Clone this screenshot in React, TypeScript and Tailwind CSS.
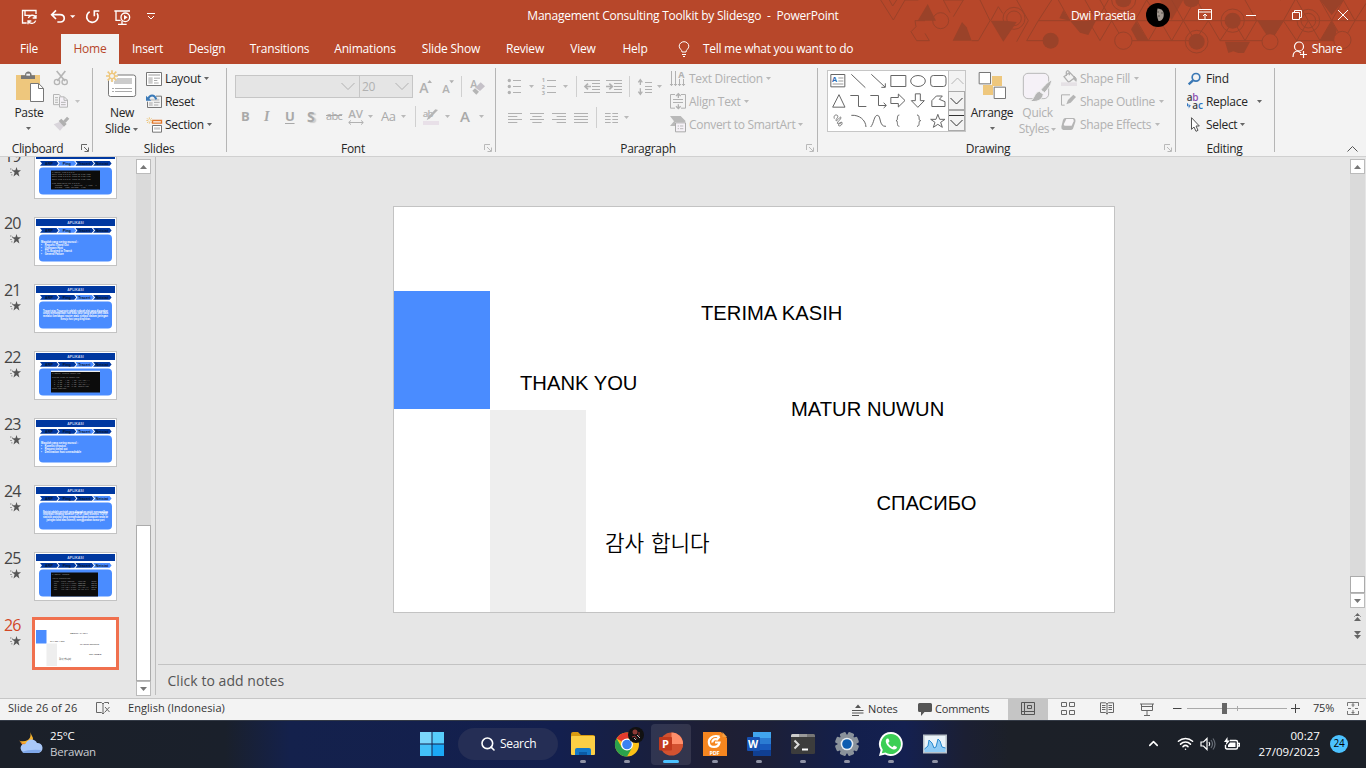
import React from "react";
import { Search, Wifi, ChevronUp } from "lucide-react";

/* Icon whose drawing units are a third of a pixel. */
function Ic({ v, c = "", children }: { v: string; c?: string; children?: React.ReactNode }) {
  const [, , w, h] = v.split(" ").map(Number);
  return (
    <svg viewBox={v} width={w / 3} height={h / 3} className={"shrink-0 overflow-visible " + c} fill="none" strokeWidth={3}>
      {children}
    </svg>
  );
}

function Caret({ c = "", tone = "fill-[#666]" }: { c?: string; tone?: string }) {
  return (
    <svg viewBox="0 0 5 3" width={5} height={3} className={"shrink-0 " + tone + " " + c}>
      <path d="M0 0H5L2.5 3Z" />
    </svg>
  );
}

function Launcher({ tone = "stroke-[#b9b9b9]" }: { tone?: string }) {
  return (
    <svg viewBox="0 0 8 8" width={8} height={8} fill="none" className={"shrink-0 " + tone}>
      <path d="M.5 6V.5H6M3 3l4 4M7.5 3.500V7.500H3.500" />
    </svg>
  );
}

function Group({ c, label, labelC, launcher, children }: { c: string; label: string; labelC: string; launcher?: React.ReactNode; children: React.ReactNode }) {
  return (
    <section className={"flex shrink-0 " + c}>
      <div className="flex min-w-0 flex-1 flex-col">
        <div className="flex h-[75px] items-start">{children}</div>
        <div className="flex h-[17px] items-center">
          <span className={"shrink-0 pt-[2px] text-center leading-[16px] text-[#262626] " + labelC}>{label}</span>
          <span className="ml-auto mr-[3px]">{launcher}</span>
        </div>
      </div>
      <div className="my-1 w-px bg-[#b5b5b5]" />
    </section>
  );
}

function Line({ icon, text, caret, off, c = "" }: { icon: React.ReactNode; text: string; caret?: string; off?: boolean; c?: string }) {
  return (
    <div className={"flex h-[23px] items-center whitespace-nowrap " + c}>
      <span className="flex w-[19px] shrink-0 items-center">{icon}</span>
      <span className={off ? "text-[#b1b1b1]" : "text-[#262626]"}>{text}</span>
      {caret && <Caret c={caret} tone={off ? "fill-[#b9b9b9]" : "fill-[#666]"} />}
    </div>
  );
}

function Pattern() {
  const d = "#9a4229";
  return (
    <svg className="absolute right-0 top-0" viewBox="0 0 1548 192" width={516} height={64} fill="none" stroke={d} strokeWidth={3}>
      <path d="M92 0L130 60L165 0M118 0L128 18L140 0M165 0H205M225 62H195L198 80L183 95L200 122H238L225 100M280 0L300 38M280 0H340L310 50M365 122H385L420 62L390 0M422 62L445 20L458 40M500 125L535 62L500 0M530 122L565 62H660M530 122H580M565 62L605 0M625 0L660 62M740 62L705 0M740 62L775 0M750 122L785 62L820 122H1040M750 122L715 62H1548M785 62L750 0M855 62L890 0L930 62L895 122L860 62M930 62L965 122L1000 62L965 0M1000 62L1035 0M1000 62L1035 122M1035 122L1075 62L1040 0M1075 62L1110 122L1150 62L1185 122L1220 62M1220 62L1185 0M1262 122L1300 62L1340 122L1375 62L1410 122L1445 62L1410 0M1300 62L1335 0M1375 62L1340 0M1445 62L1480 0L1515 62L1548 10M1515 62L1480 122H1340M1110 122H1240M1480 122L1445 62" />
      <g fill={d} stroke="none">
        <path d="M203 62L233 12L258 62Z" />
        <path d="M308 122L336 66L350 82L365 122Z" />
        <path d="M422 62H465L500 66L460 125Z" />
        <path d="M640 30L660 62H738L715 105L690 98L660 62L628 55Z" />
        <path d="M843 88L858 64L895 122H862Z" />
        <path d="M930 0L965 60L1000 0Z" opacity=".75" />
        <path d="M1222 62H1302L1262 124Z" />
        <path d="M1125 125H1200L1182 159H1165L1150 154L1135 159Z" />
        <path d="M1410 0H1482L1445 45Z" />
        <path d="M1410 122L1445 64L1460 90L1452 122Z" />
        <circle cx="602" cy="122" r="24" />
        <path d="M796 0A24 22 0 0 0 844 0Z" />
        <circle cx="1040" cy="125" r="24" />
        <circle cx="1148" cy="62" r="24" />
        <path d="M1000 0A24 22 0 0 0 1048 0Z" />
      </g>
      <g>
        <circle cx="272" cy="62" r="24" />
        <circle cx="492" cy="55" r="22" /><circle cx="492" cy="55" r="33" />
        <circle cx="820" cy="122" r="26" fill="#b7472a" />
        <circle cx="1040" cy="125" r="34" /><circle cx="1148" cy="62" r="35" />
        <circle cx="1260" cy="125" r="24" fill="#b7472a" />
        <circle cx="1375" cy="62" r="22" /><circle cx="1375" cy="62" r="34" />
        <circle cx="1477" cy="120" r="26" fill="#b7472a" />
        <path d="M785 0A36 33 0 0 0 857 0M1335 0A36 33 0 0 0 1290 0" />
      </g>
    </svg>
  );
}

function TitleBar() {
  return (
    <header className="flex h-[34px] text-white">
      <div className="flex w-[400px] items-start pl-[21px] pt-[9px]">
        <Ic v="63 27 51 51" c="stroke-white">
          <path d="M80 69H67.500V31.500H108V42M75 33V46H92" strokeWidth={4} />
          <path d="M85 54A12 12 0 0 1 107 52M108 45V54H98M107 62A12 12 0 0 1 85 64M84 73V63H94" strokeWidth={4} />
        </Ic>
        <Ic v="150 27 78 51" c="ml-[12px] stroke-white">
          <path d="M156 44H180C197 44 197 67 180 66H172M168 31L155 44L168 57" strokeWidth={5} />
          <path d="M210 46H226L218 54Z" fill="white" stroke="none" />
        </Ic>
        <Ic v="255 27 48 51" c="ml-[9px] stroke-white">
          <path d="M269 35A17 17 0 1 0 291 40" strokeWidth={5} /><path d="M298 33H283V49" strokeWidth={5} />
        </Ic>
        <Ic v="342 27 51 51" c="ml-[13px] stroke-white">
          <path d="M343 33H390M348 34V61H362M354 73H380M366 62V72" strokeWidth={4} />
          <circle cx="376" cy="52" r="13" strokeWidth={4} fill="#b7472a" /><path d="M372 45V59L383 52Z" fill="white" stroke="none" />
        </Ic>
        <Ic v="438 27 30 51" c="ml-[15px] stroke-white">
          <path d="M441 40.500H465M444 48L453 57L462 48" />
        </Ic>
      </div>
      <div className="flex-1 whitespace-pre pt-[7px] text-center leading-[18px] tracking-[-0.23px]">Management Consulting Toolkit by Slidesgo  -  PowerPoint</div>
      <div className="relative flex w-[400px] items-start pl-[105px]">
        <span className="w-[75px] whitespace-nowrap pt-[7px] leading-[18px] tracking-[-0.4px]">Dwi Prasetia</span>
        <svg width={24} height={24} viewBox="0 0 24 24" className="mt-[3px]">
          <circle cx="12" cy="12" r="12" fill="#000" />
          <path d="M11.500 5.500C16.500 5.500 18.500 9 17.500 14C16.500 17 14.500 18.500 12.500 18Q10 12 11.500 5.500Z" fill="#a0978f" />
          <path d="M12 8v2M16 9v2M13 12v2" stroke="#5a5450" fill="none" />
        </svg>
        <svg width={14} height={12} viewBox="0 0 14 12" fill="none" stroke="white" className="ml-[28px] mt-[9px]">
          <path d="M.5.5h13v10H.5zM.5 3H13.500M7 10V5M5 7l2-2 2 2" />
        </svg>
        <svg width={12} height={12} viewBox="0 0 12 12" stroke="white" className="ml-[33px] mt-[9px]"><path d="M1 6.500H11" /></svg>
        <svg width={12} height={12} viewBox="0 0 12 12" fill="none" stroke="white" className="ml-[34px] mt-[9px]"><path d="M1.500 3.500h7v7h-7zM3.500 3.500v-2h7v7h-2" /></svg>
        <svg width={12} height={12} viewBox="0 0 12 12" fill="none" stroke="white" className="ml-[34px] mt-[9px]"><path d="M1 1l10 10M11 1L1 11" /></svg>
      </div>
    </header>
  );
}

const tabs: [string, string][] = [
  ["Insert", "w-[57px]"],
  ["Design", "w-[62px]"],
  ["Transitions", "w-[83px]"],
  ["Animations", "w-[88px]"],
  ["Slide Show", "w-[84px]"],
  ["Review", "w-[64px]"],
  ["View", "w-[52px]"],
  ["Help", "w-[52px]"],
];

function TabRow() {
  return (
    <nav className="relative flex h-[30px] items-center text-white">
      <span className="w-[61px] pr-[3px] text-center">File</span>
      <span className="flex h-full w-[58px] items-center justify-center bg-[#f3f3f3] text-[#b7472a]">Home</span>
      {tabs.map(([t, w]) => (
        <span key={t} className={"whitespace-nowrap text-center " + w}>{t}</span>
      ))}
      <svg width={12} height={16} viewBox="0 0 12 16" fill="none" stroke="white" className="ml-[17px]">
        <path d="M4 11C4 8.500 1.200 8 1.200 5.200A4.800 4.500 0 0 1 10.800 5.200C10.800 8 8 8.500 8 11ZM4 13.500H8M5 15.500H7" />
      </svg>
      <span className="ml-[13px] whitespace-nowrap tracking-[-0.28px]">Tell me what you want to do</span>
      <span className="ml-auto flex items-center pr-[24px] tracking-[-0.4px]">
        <svg width={16} height={17} viewBox="0 0 16 17" fill="none" stroke="white" className="mr-[4px]">
          <circle cx="7" cy="5.500" r="4.500" strokeWidth={1.200} /><path d="M1 16C1 12 3 10 6 10L9 12M8 13.500H15M11.500 10V17" strokeWidth={1.200} />
        </svg>
        Share
      </span>
    </nav>
  );
}

function Clipboard() {
  return (
    <Group c="w-[93px]" label="Clipboard" labelC="w-[75px]" launcher={<Launcher tone="stroke-[#666]" />}>
      <div className="ml-[14px] mt-[6px] flex w-[32px] flex-col">
        <Ic v="45 210 93 99">
          <path d="M51 225H123V300H51Z" fill="#eec77d" />
          <path d="M66 237V226H78C78 211 98 211 98 226H108V237Z" fill="#777" /><path d="M82 221H93V227H82Z" fill="#f3f3f3" />
          <path d="M94.500 250.500H119L133.500 265V304.500H94.500Z" fill="white" stroke="#777" /><path d="M118.500 251V265.500H133" stroke="#777" />
        </Ic>
        <span className="mt-[2px] w-[30px] text-center leading-[16px]">Paste</span>
        <Caret c="ml-[12px] mt-[6px]" />
      </div>
      <div className="ml-[7px] mt-[6px] flex flex-col">
        <Ic v="159 210 48 48" c="stroke-[#b5b5b5]"><path d="M170 213L195 243M196 213L172 243" strokeWidth={5} /><circle cx="171" cy="246" r="8" strokeWidth={4} /><circle cx="194" cy="246" r="8" strokeWidth={4} /></Ic>
        <div className="mt-[7px] flex items-center">
          <Ic v="159 280 48 48" c="stroke-[#b5b5b5]"><path d="M177 315H160.500V284.500H177L184 291M165 294H174M165 301H174M165 308H174" /><path d="M178.500 291.500H193L202.500 301V322.500H178.500ZM192 292V302H202M183 308H197M183 315H197" fill="#f5f1f7" /></Ic>
          <Caret c="ml-[6px]" tone="fill-[#c2c2c2]" />
        </div>
        <Ic v="159 348 51 48" c="mt-[7px]"><path d="M161 373L180 365L192 378L180 392Z" fill="#d9d5db" /><path d="M176 363L184 356L200 372L192 380ZM190 362L201 350L208 356L197 368Z" fill="#b0b0b0" /></Ic>
      </div>
    </Group>
  );
}

function Slides() {
  return (
    <Group c="w-[134px]" label="Slides" labelC="ml-[46px] w-[40px]">
      <div className="ml-[12px] mt-[6px] flex w-[34px] flex-col">
        <Ic v="315 210 96 84">
          <path d="M325.500 225H400Q407 225 407 232V284Q407 289.500 400 289.500H332Q325.500 289.500 325.500 284Z" fill="white" stroke="#777" />
          <path d="M342 234H396V252H342Z" fill="#ccc" /><path d="M336 265.500H342M345 265.500H396M336 274.500H342M345 274.500H396" stroke="#aaa" />
          <circle cx="336" cy="228" r="17" fill="#f3f3f3" />
          <path d="M336 211V220M336 236V246M318 228H328M344 228H354M323 215L330 222M342 234L349 241M349 215L342 222M330 234L323 241" stroke="#eec77d" strokeWidth={5} /><circle cx="336" cy="228" r="8" stroke="#eec77d" strokeWidth={4} />
        </Ic>
        <span className="mt-[7px] text-center leading-[16px]">New</span>
        <span className="flex items-center leading-[16px]">Slide<Caret c="ml-[3px]" /></span>
      </div>
      <div className="ml-[7px] mt-[3px]">
        <Line text="Layout" caret="ml-[3px]" icon={<Ic v="438 213 48 42"><path d="M439.500 214.500H484.500V253.500H439.500Z" fill="white" stroke="#777" /><path d="M445 219H480V225H445ZM445 229H458V248H445Z" fill="#ccc" /><path d="M462 231.500H480M462 238.500H472M462 246H476" stroke="#aaa" /></Ic>} />
        <Line text="Reset" icon={<Ic v="438 282 48 45"><path d="M468 288.500H484.500V322.500H442.500V305" stroke="#777" /><path d="M446 296H478V302H446ZM447 306H458V318H447Z" fill="#ccc" /><path d="M462 307H479M462 315H475" stroke="#aaa" /><path d="M444 297C450 284 462 282 469 298" stroke="#3a7ab8" strokeWidth={6} /><path d="M438 287V302H454Z" fill="#3a7ab8" /></Ic>} />
        <Line text="Section" caret="ml-[3px]" icon={<Ic v="438 348 48 48"><path d="M457.500 358.500H484.500V366.500H457.500Z" fill="white" stroke="#e0762a" strokeWidth={4} /><path d="M457.500 373.500H484.500V393.500H457.500Z" fill="white" stroke="#777" /><path d="M462 379H480V386H462Z" fill="#ccc" /><path d="M448 349V355M448 362V368M439 358.500H445M451 358.500H457M441 352L445 356M451 362L455 366M455 352L451 356M445 362L441 366" stroke="#eec77d" /></Ic>} />
      </div>
    </Group>
  );
}

const tOff = "fill-[#b1b1b1] stroke-none font-['Open_Sans']";

function FontGroup() {
  return (
    <Group c="w-[269px]" label="Font" labelC="ml-[106px] w-[40px]" launcher={<Launcher />}>
      <div className="flex flex-col">
        <div className="mt-[10px] flex h-[25px] items-center pl-[8px]">
          <div className="flex h-[23px] w-[178px] shrink-0 border border-[#c6c6c6] bg-[#e5e5e5]">
            <div className="flex w-[124px] items-center justify-end border-r border-[#c6c6c6] pr-[4px]">
              <svg width={14} height={9} viewBox="0 0 14 9" fill="none" stroke="#b1b1b1"><path d="M.5 1l6.500 6.500L13.500 1" /></svg>
            </div>
            <div className="flex flex-1 items-center justify-between pl-[2px] pr-[3px] text-[#b1b1b1]">
              20<svg width={14} height={9} viewBox="0 0 14 9" fill="none" stroke="#b1b1b1"><path d="M.5 1l6.500 6.500L13.500 1" /></svg>
            </div>
          </div>
          <Ic v="573 45 51 66" c="ml-[4px]"><text x="580" y="97" fontSize="42" fontWeight="600" className={tOff}>A</text><path d="M604 66L611 57L618 66Z" fill="#b1b1b1" /></Ic>
          <Ic v="639 45 51 66" c="ml-[5px]"><text x="649" y="97" fontSize="34" fontWeight="600" className={tOff}>A</text><path d="M670 58H684L677 67Z" fill="#b1b1b1" /></Ic>
          <div className="ml-[5px] h-[21px] w-px bg-[#d0d0d0]" />
          <Ic v="726 45 60 66" c="ml-[6px]"><text x="733" y="81" fontSize="32" className={tOff} fontWeight="600">A</text><path d="M748 80L764 64L777 76L762 90Z" fill="#c5c1c8" /><path d="M739 89L747 82L759 92L751 101Z" fill="#b5b5b5" /></Ic>
        </div>
        <div className="mt-[7px] flex h-[21px] items-center pl-[14px] font-bold text-[#a9a9a9]">
          <span className="w-[23px] text-[13px]">B</span>
          <span className="w-[21px] font-['Liberation_Serif'] text-[14px] italic">I</span>
          <span className="w-[22px] text-[13px] underline underline-offset-2">U</span>
          <span className="w-[19px] text-[14px] [text-shadow:2px_1px_1px_#ccc]">S</span>
          <span className="w-[22px] text-[11px] font-normal tracking-[-0.7px] line-through">abc</span>
          <Ic v="366 144 48 48" c="stroke-[#b1b1b1]"><text x="367" y="171" fontSize="32" fontWeight="600" textLength="44" lengthAdjust="spacingAndGlyphs" className={tOff}>AV</text><path d="M369 184.500H411M375 178L368 184.500L375 191M405 178L412 184.500L405 191" strokeWidth={3} /></Ic>
          <Caret c="ml-[4px]" tone="fill-[#b9b9b9]" />
          <span className="ml-[8px] w-[20px] text-[13px] font-normal tracking-[-0.4px]">Aa</span>
          <Caret tone="fill-[#b9b9b9]" />
          <div className="ml-[9px] h-[21px] w-px bg-[#d0d0d0]" />
          <Ic v="588 144 54 54" c="ml-[6px]"><text x="590" y="170" fontSize="29" fontWeight="600" className={tOff} textLength="32">ab</text><path d="M636 150L612 175L602 181L606 171L628 148Z" fill="#b5b5b5" /><path d="M591 183H639V195H591Z" fill="#e8e0e8" /></Ic>
          <Caret c="ml-[5px]" tone="fill-[#b9b9b9]" />
          <span className="ml-[10px] w-[19px] text-[15px] font-semibold">A</span>
          <Caret tone="fill-[#b9b9b9]" />
        </div>
      </div>
    </Group>
  );
}

const g = "stroke-[#b1b1b1]";
const Sep = ({ c }: { c: string }) => <div className={"h-[21px] w-px shrink-0 bg-[#cfcfcf] " + c} />;

function Paragraph() {
  return (
    <Group c="w-[322px]" label="Paragraph" labelC="ml-[122px] w-[60px]" launcher={<Launcher />}>
      <div className="flex w-[174px] flex-col pl-[11px]">
        <div className="mt-[12px] flex h-[21px] items-center">
          <Ic v="51 48 45 57" c={g}><path d="M69 58.500H93M69 76.500H93M69 94.500H93" /><g fill="#b1b1b1" stroke="none"><circle cx="58" cy="58.500" r="5" /><circle cx="58" cy="76.500" r="5" /><circle cx="58" cy="94.500" r="5" /></g></Ic>
          <Caret c="ml-[7px]" tone="fill-[#b9b9b9]" />
          <Ic v="153 48 48 57" c={"ml-[7px] " + g}><path d="M171 58.500H198M171 76.500H198M171 94.500H198" />{[64, 83, 101].map((y, i) => <text key={y} x="155" y={y} fontSize="17" fontWeight="700" className={tOff}>{i + 1}</text>)}</Ic>
          <Caret c="ml-[6px]" tone="fill-[#b9b9b9]" />
          <Sep c="ml-[8px]" />
          <Ic v="279 48 54 57" c={"ml-[6px] " + g}><path d="M282 58.500H330M306 67.500H330M306 76.500H330M306 85.500H330M282 94.500H330" /><path d="M303 76.500H288M294 68L285 76.500L294 85" strokeWidth={5} /></Ic>
          <Ic v="345 48 54 57" c={"ml-[4px] " + g}><path d="M348 58.500H396M372 67.500H396M372 76.500H396M372 85.500H396M348 94.500H396" /><path d="M348 76.500H364M358 68L367 76.500L358 85" strokeWidth={5} /></Ic>
          <Sep c="ml-[6px]" />
          <Ic v="441 48 48 57" c={"ml-[7px] " + g}><path d="M465 64.500H486M465 76.500H486M465 85.500H486M465 94.500H486" /><path d="M451 57V72M445 64L451 56L457 64M451 82V100M445 92L451 100L457 92" strokeWidth={4} /></Ic>
          <Caret c="ml-[4px]" tone="fill-[#b9b9b9]" />
        </div>
        <div className="mt-[10px] flex h-[21px] items-center">
          <Ic v="51 150 48 42" c={g}><path d="M54 157.500H96M54 166.500H82M54 175.500H96M54 184.500H82" /></Ic>
          <Ic v="117 150 48 42" c={"ml-[6px] " + g}><path d="M120 157.500H162M127 166.500H155M120 175.500H162M127 184.500H155" /></Ic>
          <Ic v="183 150 48 42" c={"ml-[6px] " + g}><path d="M186 157.500H228M200 166.500H228M186 175.500H228M200 184.500H228" /></Ic>
          <Ic v="249 150 48 42" c={"ml-[6px] " + g}><path d="M252 157.500H294M252 166.500H294M252 175.500H294M252 184.500H294" /></Ic>
          <Sep c="ml-[7px]" />
          <Ic v="342 150 45 42" c={"ml-[7px] " + g}><path d="M345 157.500H362M367 157.500H384M345 166.500H362M367 166.500H384M345 175.500H362M367 175.500H384M345 184.500H362M367 184.500H384" /></Ic>
          <Caret c="ml-[5px]" tone="fill-[#b9b9b9]" />
        </div>
      </div>
      <div className="mt-[3px]">
        <Line off text="Text Direction" caret="ml-[3px]" icon={<Ic v="540 30 48 51" c={g}><path d="M544.500 33V77M556.500 33V77M568.500 57V77M580.500 57V77M540 72L544.500 77L549 72M552 72L556.500 77L561 72M564 72L568.500 77L573 72M576 72L580.500 77L585 72" /><text x="565" y="53" fontSize="27" fontWeight="700" className={tOff}>A</text></Ic>} />
        <Line off text="Align Text" caret="ml-[3px]" icon={<Ic v="540 99 48 51" c={g}><path d="M555 103.500H541.500V144.500H555M573 103.500H586.500V144.500H573M549 118.500H579M549 127.500H579" /><path d="M565 102V114M558 108L565 101L572 108M565 133V146M558 139L565 146L572 139" strokeWidth={4} /></Ic>} />
        <Line off text="Convert to SmartArt" caret="ml-[3px]" icon={<Ic v="540 168 48 51"><path d="M540 168H572L586 182V186H556V198H540L552 184Z" fill="#b9b9b9" /><path d="M556.500 188.500H586.500V215.500H556.500Z" fill="#f5f1f7" stroke="#aaa" /><path d="M563 198H567M570 198H580M563 206H567M570 206H580" stroke="#bbb" /></Ic>} />
      </div>
    </Group>
  );
}

const shapes: React.ReactNode[] = [
  <><path d="M46.500 43.500H88.500V80.500H46.500Z" /><path d="M69 54H84M69 63H84M52 72H84" stroke="#999" /><text x="50" y="66" fontSize="22" fontWeight="700" className="fill-[#2f6db5] stroke-none">A</text></>,
  <path d="M108 43L150 83" />,
  <path d="M168 43L209 81M210 70V82H198" />,
  <path d="M226.500 46.500H271.500V79.500H226.500Z" />,
  <ellipse cx="308" cy="63" rx="22" ry="16.500" />,
  <rect x="346" y="46.500" width="46" height="33" rx="8" />,
  <path d="M71 104L89 141.500H52Z" />,
  <path d="M105 106.500H129.500V139.500H153" />,
  <path d="M165 106.500H189.500V136.500H212M205 128L213 136.500L205 144" />,
  <path d="M226.500 112.500H249V102L269 121.500L249 141V130.500H226.500Z" />,
  <path d="M300 101.500H315V122H327L307.500 142L288 122H300Z" />,
  <path d="M349.500 139.500V122L363 108H381L372 118L389 125V139.500Z" />,
  <path d="M57 176C54 166 61 163 66 166C72 170 60 178 62 182C66 184 74 168 77 172C78 178 66 184 66 190C70 194 76 184 80 187C82 194 74 200 70 197C68 192 74 188 78 193" strokeWidth={2.5} />,
  <path d="M108 166C132 164 151 180 152 201" />,
  <path d="M166 201C176 190 176 166 186 166C198 166 190 201 212 199" />,
  <path d="M252 165C242 165 250 182 242 182C250 182 242 199 252 199" />,
  <path d="M305 165C316 165 307 182 316 182C307 182 316 199 305 199" />,
  <path d="M367.500 163L373 178H389L376 187L381 202L367.500 193L354 202L359 187L346 178H362Z" />,
];

function Drawing() {
  return (
    <Group c="w-[358px]" label="Drawing" labelC="ml-[145px] w-[50px]" launcher={<Launcher />}>
      <div className="ml-[9px] mt-[6px] flex h-[62px] w-[139px] border border-[#c6c6c6] bg-white">
        <div className="grid w-[121px] grid-cols-6 content-start">
          {shapes.map((s, i) => (
            <Ic key={i} v={`${38 + 60 * (i % 6)} ${33 + 60 * Math.floor(i / 6)} 60 60`} c="stroke-[#666]">{s}</Ic>
          ))}
        </div>
        <div className="flex w-[17px] flex-col bg-[#f3f3f3]">
          <div className="flex h-[20px] items-center justify-center border-l border-[#c6c6c6]"><svg width={13} height={8} viewBox="0 0 13 8" fill="none" stroke="#b5b5b5"><path d="M.5 7L6.500 1l6 6" /></svg></div>
          <div className="flex h-[20px] items-center justify-center border border-[#aaa]"><svg width={13} height={8} viewBox="0 0 13 8" fill="none" stroke="#333"><path d="M.5 1l6 6 6-6" /></svg></div>
          <div className="flex h-[21px] items-center justify-center border border-[#aaa]"><svg width={15} height={15} viewBox="0 0 15 15" fill="none" stroke="#333"><path d="M0 2.500H15M1.500 7l6 6 6-6" /></svg></div>
        </div>
      </div>
      <div className="ml-[5px] mt-[8px] flex w-[42px] flex-col items-center">
        <Ic v="486 36 87 84"><path d="M528 48H558V78H528ZM501 75H531V105H501Z" fill="#eec77d" /><path d="M489.500 37.500H523.500V71.500H489.500ZM534.500 81.500H568.500V115.500H534.500Z" fill="white" stroke="#777" /></Ic>
        <span className="mt-[5px] leading-[16px]">Arrange</span>
        <Caret c="mt-[6px]" />
      </div>
      <div className="ml-[5px] mt-[7px] flex w-[39px] flex-col items-center text-[#b1b1b1]">
        <Ic v="621 33 99 96"><rect x="628" y="40" width="76" height="76" rx="14" fill="#f5f1f7" stroke="#b9b9b9" /><path d="M712 60C714 72 704 84 692 98L680 90C694 74 702 66 712 60ZM676 94L688 103C684 124 664 126 648 124C662 118 660 98 676 94Z" fill="#b5b5b5" stroke="#f3f3f3" /></Ic>
        <span className="mt-[2px] leading-[16px]">Quick</span>
        <span className="flex items-center leading-[16px]">Styles<Caret c="ml-[2px]" tone="fill-[#b9b9b9]" /></span>
      </div>
      <div className="ml-[4px] mt-[3px]">
        <Line off text="Shape Fill" caret="ml-[4px]" icon={<Ic v="741 30 48 51" c={g}><path d="M750 50L767 37L782 53L764 67ZM757 48V36Q761 28 766 36V46" strokeWidth={4} /><path d="M780 48Q790 56 786 64L780 58Z" fill="#b1b1b1" /><path d="M741 67H789V78H741Z" fill="#e5e1e5" stroke="none" /></Ic>} />
        <Line off text="Shape Outline" caret="ml-[4px]" icon={<Ic v="741 96 48 51" c={g}><path d="M768 101.500H742.500V132.500H752" /><path d="M757 130L762 117L778 101L786 108L770 125Z" fill="#b5b5b5" stroke="none" /></Ic>} />
        <Line off text="Shape Effects" caret="ml-[4px]" icon={<Ic v="741 168 48 51"><path d="M754 174H779Q786 176 784 186L777 206Q774 211 768 210H748Q741 208 742 200L747 180Q749 174 754 174Z" fill="#b5b5b5" /><path d="M757 177H777Q780 179 779 184L773 197H752Q748 195 750 191Z" fill="#f8f6f8" /></Ic>} />
      </div>
    </Group>
  );
}

function Editing() {
  return (
    <Group c="w-[99px]" label="Editing" labelC="ml-[27px] w-[43px]">
      <div className="ml-[11px] mt-[3px]">
        <Line text="Find" icon={<Ic v="1011 213 48 42"><circle cx="1038" cy="229" r="11.500" stroke="#3a78b5" strokeWidth={5} /><path d="M1029 238L1016 250" stroke="#3a78b5" strokeWidth={7} /></Ic>} />
        <Line text="Replace" caret="ml-[9px]" icon={<Ic v="1011 276 48 51"><text x="1010" y="299" fontSize="30" fontWeight="600" fill="#444" className="font-['Open_Sans']">a<tspan fill="#8c50b0">b</tspan></text><text x="1027" y="323" fontSize="30" fontWeight="600" fill="#444" className="font-['Open_Sans']">a<tspan fill="#2f74c0">c</tspan></text><path d="M1012.500 307V315H1020M1016 310L1021 315L1016 320" stroke="#2f74c0" /></Ic>} />
        <Line text="Select" caret="ml-[3px]" icon={<Ic v="1011 345 48 51"><path d="M1024.500 350V385L1032 378L1038 391L1044 388L1038 375H1048Z" fill="white" stroke="#555" /></Ic>} />
      </div>
    </Group>
  );
}

function StarMark() {
  return (
    <svg width={11} height={10} viewBox="0 0 11 10" fill="#555">
      <path d="M6.500 0l1.100 3.300H11L8.300 5.500 9.400 9.500 6.500 7.300 3.500 9.500 4.600 5.500 2 3.300H5.400Z" /><path d="M0 1.500h1.500v1H0zM2 2.500h1v1H2zM0 5h2v.8H0zM1 7.500h1.500v.8H1z" opacity=".7" />
    </svg>
  );
}

type Deck = { n: number; active: number; kind: "term" | "list" | "para"; lines: string[] };
const deck: Deck[] = [
  { n: 19, active: 1, kind: "term", lines: ["C:\\Users> ping 8.8.8.8", "Reply from 8.8.8.8: bytes=32 time=20ms", "Reply from 8.8.8.8: bytes=32 time=21ms", "Reply from 8.8.8.8: bytes=32 time=20ms", "", "Ping statistics for 8.8.8.8:", "   Packets: Sent = 4, Received = 4, Lost = 0", "   Minimum = 20ms, Maximum = 21ms"] },
  { n: 20, active: 1, kind: "list", lines: ["Masalah yang sering muncul :", "•    Request Timed Out", "•    Unknown Host", "•    TTL Expired in Transit", "•    General Failure"] },
  { n: 21, active: 2, kind: "para", lines: ["Tracert atau Traceroute adalah sebuah alat yang digunakan", "untuk menampilkan rute atau jalur yang dilalui oleh data", "melalui berbagai router atau simpul dalam jaringan", "menuju host yang diinginkan."] },
  { n: 22, active: 2, kind: "term", lines: ["C:\\Users> tracert google.com", "", "Tracing route to google.com", "  1   2 ms   1 ms   1 ms  192.168.1.1", "  2   5 ms   4 ms   4 ms  10.0.0.1", "  3  12 ms  11 ms  12 ms  180.252.1.1", "  4  20 ms  20 ms  19 ms  google.com", "Trace complete."] },
  { n: 23, active: 2, kind: "list", lines: ["Masalah yang sering muncul :", "•    Koneksi terputus", "•    Request timed out", "•    Destination host unreachable"] },
  { n: 24, active: 3, kind: "para", lines: ["Netstat adalah perintah yang digunakan untuk menampilkan", "informasi tentang koneksi TCP/IP, tabel koneksi TCP/IP,", "statistik protokol yang menghubungkan komputer anda ke", "jaringan lokal atau internet, menggunakan nomor port"] },
  { n: 25, active: 3, kind: "term", lines: ["C:\\Users> netstat", "", "Active Connections", "  Proto  Local Address    Foreign      State", "  TCP    127.0.0.1:49670  DESKTOP      ESTAB", "  TCP    127.0.0.1:49671  DESKTOP      ESTAB", "  TCP    192.168.1.5:501  20.198.119   ESTAB", "  TCP    192.168.1.5:502  52.98.40.2   WAIT"] },
];

function MiniSlide({ d }: { d: Deck }) {
  return (
    <svg width={83} height={49} viewBox="0 0 83 49" className="font-['Liberation_Sans'] tracking-normal">
      <rect x=".5" y=".5" width="82" height="48" fill="white" stroke="#c3c3c3" />
      <rect x="2" y="2" width="79" height="7" fill="#0038a0" />
      <text x="41.500" y="6.800" fontSize="3.500" fontWeight="700" textAnchor="middle" fill="#c7d2ec">APLIKASI</text>
      {["ARP", "Ping", "Tracert", "Netstat"].map((t, i) => (
        <g key={t}>
          <path d={`M${6 + i * 17.700} 11H${22.500 + i * 17.700}L${24.500 + i * 17.700} 13.400L${22.500 + i * 17.700} 15.800H${6 + i * 17.700}L${8 + i * 17.700} 13.400Z`} fill={i === d.active ? "#4a8cff" : "#0038a0"} />
          <text x={15 + i * 17.700} y="14.800" fontSize="3.700" fontWeight="700" textAnchor="middle" fill="#07152e">{t}</text>
        </g>
      ))}
      <rect x="5" y="17.500" width="73" height="27" rx="4" fill="#4a8cff" />
      {d.kind === "term" && <rect x="17" y="20.500" width={d.n === 25 ? 47 : 49} height={d.n === 19 ? 19 : d.n === 22 ? 21 : 24} fill="#0c0c0c" />}
      {d.kind === "term" && d.n === 22 && <rect x="17" y="19.700" width="49" height="1.300" fill="#eee" />}
      {d.lines.map((l, i) =>
        d.kind === "term" ? (
          <text key={i} x="18" y={23 + i * 2.200} fontSize="1.700" fill="#aaa" className="whitespace-pre font-['Liberation_Mono']">{l}</text>
        ) : d.kind === "list" ? (
          <text key={i} x={7} y={26.200 + i * 2.900} fontSize="2.600" fontWeight="700" fill="white" className="whitespace-pre">{l}</text>
        ) : (
          <text key={i} x="41.500" y={27.500 + i * 2.900} fontSize="2.600" fontWeight="700" textAnchor="middle" fill="white" textLength={i === 3 ? (d.n === 24 ? 58 : 30) : 65} lengthAdjust="spacingAndGlyphs">{l}</text>
        ),
      )}
    </svg>
  );
}

function NavPane() {
  return (
    <aside className="flex w-[156px] shrink-0">
      <div className="flex h-[541px] w-[136px] flex-col overflow-hidden">
        <div className="mt-[-9px] flex flex-col">
          {deck.map((d) => (
            <div key={d.n} className="flex h-[67px]">
              <div className="w-[34px] pl-[4px]">
                <div className="pt-px text-[16px] leading-[15px] tracking-[-1px] text-[#444]">{d.n}</div>
                <div className="pl-[6px] pt-[3px]"><StarMark /></div>
              </div>
              <div className="pt-[2px]"><MiniSlide d={d} /></div>
            </div>
          ))}
          <div className="flex h-[67px]">
            <div className="w-[32px] pl-[4px]">
              <div className="pt-px text-[16px] leading-[15px] tracking-[-1px] text-[#d24726]">26</div>
              <div className="pl-[6px] pt-[3px]"><StarMark /></div>
            </div>
            <svg width={87} height={53} viewBox="0 0 87 53" className="font-['Liberation_Sans'] tracking-normal" fontSize="2.500" fill="#222">
              <rect x="1.500" y="1.500" width="84" height="50" fill="white" stroke="#f0704e" strokeWidth={3} />
              <rect x="4" y="13" width="10.500" height="13.500" fill="#4a8cff" /><rect x="14.500" y="26.500" width="10.500" height="22.500" fill="#eee" />
              <text x="38" y="16.800">TERIMA KASIH</text><text x="18" y="24.500">THANK YOU</text><text x="48" y="27.800">MATUR NUWUN</text><text x="57" y="38">СПАСИБО</text><text x="27" y="42.800" className="font-['Noto_Sans_CJK_KR']">감사 합니다</text>
            </svg>
          </div>
        </div>
      </div>
      <div className="mt-[2px] flex h-[537px] w-[15px] flex-col bg-[#dadada]">
        <ScrollButton up />
        <div className="mt-auto h-[156px] border border-[#ababab] bg-white" />
        <ScrollButton />
      </div>
      <div className="ml-[4px] h-[538px] w-px bg-[#bdbdbd]" />
    </aside>
  );
}

function ScrollButton({ up }: { up?: boolean }) {
  return (
    <div className="flex h-[15px] w-[15px] shrink-0 items-center justify-center border border-[#bbb] bg-white">
      <svg width={7} height={4} viewBox="0 0 7 4" fill="#777"><path d={up ? "M0 4H7L3.500 0Z" : "M0 0H7L3.500 4Z"} /></svg>
    </div>
  );
}

const words: [string, string][] = [
  ["TERIMA KASIH", "left-[307px] top-[94px]"],
  ["THANK YOU", "left-[126px] top-[164px]"],
  ["MATUR NUWUN", "left-[397px] top-[190px]"],
  ["СПАСИБО", "left-[482.500px] top-[284px]"],
];

function Editor() {
  return (
    <main className="flex min-w-0 flex-1">
      <div className="flex flex-1 flex-col">
        <div className="flex h-[507px] items-start pl-[237px] pt-[49px]">
          <div className="relative h-[407px] w-[722px] overflow-hidden border border-[#c3c3c3] bg-white font-['Liberation_Sans'] text-[20.200px] leading-[24px] tracking-normal text-black">
            <div className="absolute left-0 top-[84px] h-[118px] w-[96px] bg-[#4a8cff]" />
            <div className="absolute left-[96px] top-[203px] h-[202px] w-[96px] bg-[#eee]" />
            {words.map(([w, c]) => (
              <span key={w} className={"absolute whitespace-nowrap " + c}>{w}</span>
            ))}
            <span className="absolute left-[211px] top-[323px] whitespace-nowrap font-['Noto_Sans_CJK_KR',sans-serif] text-[21.300px] font-[350] [word-spacing:2px]">감사 합니다</span>
          </div>
        </div>
        <div className="ml-[2px] flex h-[34px] items-center border-t border-[#c3c3c3] pb-[2px] pl-[9.500px] text-[14px] tracking-[0.05px] text-[#555]">Click to add notes</div>
      </div>
      <div className="flex w-[16px] flex-col">
        <div className="mt-[2px] flex h-[449px] w-[15px] flex-col bg-[#dadada]">
          <ScrollButton up />
          <div className="mt-auto h-[17px] border border-[#ababab] bg-white" />
          <ScrollButton />
        </div>
        <svg width={15} height={34} viewBox="0 0 15 34" fill="#666">
          <path d="M4 9H11L7.500 5ZM4 13H11L7.500 9ZM5 8h5v1H5zM4 23H11L7.500 27ZM4 27H11L7.500 31Z" />
        </svg>
        <div className="mt-[22px] h-px bg-[#c3c3c3]" />
      </div>
    </main>
  );
}

function StatusBar() {
  return (
    <footer className="flex h-[22px] items-center border-t border-[#c6c6c6] bg-[#f3f3f3] text-[11px] tracking-[0.05px] text-[#333]">
      <span className="w-[96px] whitespace-nowrap pb-[3px] pl-[8px]">Slide 26 of 26</span>
      <svg width={15} height={13} viewBox="0 0 15 13" fill="none" stroke="#666" className="mb-[2px]"><path d="M7 12V2L5.500.5H.5v10H5.500L7 12L8.500 10.500M7 2L8.500.5H12.500V2M9 5l4.500 5M13.500 5L9 10" /></svg>
      <span className="ml-[17px] whitespace-nowrap pb-[3px]">English (Indonesia)</span>
      <span className="ml-auto flex h-[21px] items-center">
        <svg width={12} height={12} viewBox="0 0 12 12" fill="none" stroke="#555"><path d="M0 6.500H11.500M0 9H11.500M0 11.500H7" /><path d="M3 4H9L6 .5Z" fill="#555" stroke="none" /></svg>
        <span className="ml-[4px] w-[50px] pb-px tracking-[-0.1px]">Notes</span>
        <svg width={14} height={13} viewBox="0 0 14 13" fill="#555" className="mb-px"><path d="M1.500 0h11Q14 0 14 1.500v6Q14 9 12.500 9H6.500L3 13V9H1.500Q0 9 0 7.500v-6Q0 0 1.500 0Z" /></svg>
        <span className="ml-[3px] w-[73px] pb-px tracking-[-0.2px]">Comments</span>
        <span className="flex h-[21px] w-[40px] items-center justify-center bg-[#c5c5c5]">
          <svg width={14} height={13} viewBox="0 0 14 13" fill="none" stroke="#555" className="mb-[2px]"><path d="M.5.5h13v12H.5zM3.500.5v12M.5 9.500h13M6.500 3.500h4v3h-4z" /></svg>
        </span>
        <svg width={14} height={13} viewBox="0 0 14 13" fill="none" stroke="#666" className="mb-[2px] ml-[13px]"><path d="M.5.5h5v4h-5zM8.500.5h5v4h-5zM.5 8.500h5v4h-5zM8.500 8.500h5v4h-5z" /></svg>
        <svg width={14} height={13} viewBox="0 0 14 13" fill="none" stroke="#666" className="mb-[2px] ml-[25px]"><path d="M7 12.500V2L5.500.8H.5V10.500H5.500L7 12L8.500 10.500H13.500V.8H8.500L7 2M2 3.500H5.500M2 5.500H5.500M2 7.500H5.500M8.500 3.500H12M8.500 5.500H12M8.500 7.500H12" /></svg>
        <svg width={14} height={13} viewBox="0 0 14 13" fill="none" stroke="#666" className="mb-px ml-[26px]"><path d="M0 1H14M1.500 1V7.500H12.500V1M7 8V12M4 12.500H10M1.500 3.500H12.500" /></svg>
        <svg width={9} height={9} viewBox="0 0 9 9" stroke="#444" className="mb-[2px] ml-[19px]"><path d="M0 4.500H8.500" /></svg>
        <span className="mb-[2px] ml-[5px] flex w-[100px] items-center">
          <span className="h-px w-[35px] bg-[#aaa]" /><span className="h-[11px] w-[5px] bg-[#666]" /><span className="h-px w-[10px] bg-[#aaa]" /><span className="h-[5px] w-px bg-[#aaa]" /><span className="h-px flex-1 bg-[#aaa]" />
        </span>
        <svg width={9} height={9} viewBox="0 0 9 9" stroke="#444" className="mb-[2px] ml-[4px]"><path d="M0 4.500H9M4.500 0V9" /></svg>
        <span className="ml-[13px] w-[34px] pb-[3px] tracking-[-0.2px]">75%</span>
        <svg width={12} height={13} viewBox="0 0 12 13" fill="none" stroke="#777" className="mb-[2px] mr-[7px]"><path d="M.5 4V.5H11.500V4M.5 9V12.500H11.500V9M6 1V5M4.500 3h3M6 8V12M4.500 10.500h3M1 6.500H4M8 6.500H11" /></svg>
      </span>
    </footer>
  );
}

const apps: { k: string; on?: boolean; art: React.ReactNode }[] = [
  { k: "explorer", art: <><path d="M0 2Q0 0 2 0H7L10 3H22Q24 3 24 5V22H0Z" fill="#d99a10" /><rect y="4" width="24" height="19" rx="1" fill="#fccf45" /><path d="M4 23V18Q4 16 6 16H18Q20 16 20 18V23Z" fill="#1478c8" /><path d="M8 20H16V23H8Z" fill="#0a5aa5" /></> },
  { k: "chrome", art: <><circle cx="12" cy="12.500" r="12" fill="#fbc116" /><path d="M12 12.500L1.600 6.500A12 12 0 0 1 22.400 6.500H12Z" fill="#e33b2e" /><path d="M1.600 6.500A12 12 0 0 0 12 24.500L17.200 15.500L12 12.500L6.800 15.500Z" fill="#2ba24c" /><circle cx="12" cy="12.500" r="6" fill="white" /><circle cx="12" cy="12.500" r="4.800" fill="#3b82f0" /><circle cx="21" cy="3" r="8" fill="#111" /><circle cx="20" cy="0" r="2.500" fill="#8d3a36" /><path d="M17 5l3-1 2 3M24 0v4" stroke="#933" fill="none" /><path d="M22 3l3 3M19 6l2 2" stroke="#bbb" /></> },
  { k: "powerpoint", on: true, art: <><circle cx="12.500" cy="12" r="11.500" fill="#d35230" /><path d="M12.500.5A11.500 11.500 0 0 1 24 12H12.500Z" fill="#ff8f6b" /><path d="M12.500 12H24A11.500 11.500 0 0 1 20.500 20Z" fill="#d35230" /><rect x="0" y="5" width="13" height="13.500" rx="1" fill="#c23a1d" /><text x="3" y="15.800" fontSize="11" fontWeight="700" fill="white">P</text></> },
  { k: "foxit", art: <><path d="M0 0H18L24 6V24H0Z" fill="#f6861f" /><path d="M19.500 0L24 5H19.500Z" fill="#f6a041" /><path d="M16.500 4.500C9 2.500 5 7 6 11.500C7 16 15.500 16.500 16.500 10.500H12M16.500 4.500L14 7.500C11 6.500 9 8.500 9.500 10.500" fill="none" stroke="white" strokeWidth="2.200" /><text x="6.500" y="22.500" fontSize="5.500" fontWeight="700" fill="white">PDF</text></> },
  { k: "word", art: <><path d="M6 0H24V6H6Z" fill="#41a5ee" /><path d="M6 6H24V12H6Z" fill="#2b7cd3" /><path d="M6 12H24V18H6Z" fill="#185abd" /><path d="M6 18H24V24H6Z" fill="#103f91" /><rect y="5" width="13" height="14" rx="1" fill="#1650b0" /><text x="1" y="15.800" fontSize="10.500" fontWeight="700" fill="white">W</text></> },
  { k: "terminal", art: <><rect y="2" width="24" height="20" rx="1.500" fill="#3c3c3c" /><path d="M0 5V3.500Q0 2 1.500 2H8V5Z" fill="#ccc" /><path d="M8 2h8v3H8z" fill="#999" /><path d="M16 2h6.500Q24 2 24 3.500V5h-8z" fill="#777" /><path d="M3.500 8.500L7.500 12.500L3.500 16.500" fill="none" stroke="#ddd" strokeWidth="2" /><path d="M11 17.500H17" stroke="white" strokeWidth="2" /></> },
  { k: "settings", art: <><g fill="#8a929b">{[0, 45, 90, 135].map((a) => <rect key={a} x="8.800" y="0" width="6.400" height="24" rx="1.500" transform={`rotate(${a + 22.500} 12 12)`} />)}<circle cx="12" cy="12" r="9.500" /></g><circle cx="12" cy="12" r="6.300" fill="#e8edf2" /><circle cx="12" cy="12" r="4.800" fill="#0d5cb0" /></> },
  { k: "whatsapp", art: <><path d="M12 0A12 12 0 1 1 6 22.500L0 24L1.600 18A12 12 0 0 1 12 0Z" fill="white" /><path d="M12 2A10 10 0 1 1 6.500 20.400L2.800 21.300L3.800 17.700A10 10 0 0 1 12 2Z" fill="#3ccf55" /><path d="M8 6.500C6 8 6.500 11 9 14C12 17.500 15.500 18.500 17.500 16.500C18 15.500 18 15 17.500 14.700L15 13.500L13.500 15.200C12 14.700 9.800 12.500 9.200 11L10.500 9.300L9.500 6.800Z" fill="white" /></> },
  { k: "monitor", art: <><rect y="2.500" width="24" height="19" fill="#b9c2c9" /><rect x="1.500" y="4" width="21" height="16" fill="#eaf3f9" /><path d="M1.500 17L5 14L6 8L9 11L11 16L13 15L15 7L17 9L19 15L22.500 16V20H1.500Z" fill="#8fcbf5" /><path d="M1.500 17L5 14L6 8L9 11L11 16L13 15L15 7L17 9L19 15L22.500 16" fill="none" stroke="#2789cf" /></> },
];

function Taskbar() {
  return (
    <div className="flex h-[48px] items-center border-t border-[#343b47] bg-[linear-gradient(90deg,#1b2029_0px,#1a202b_225px,#14214c_290px,#131f4e_560px,#181f40_640px,#1f1f33_720px,#1c1f38_770px,#131f4c_850px,#142050_905px,#1b1f33_965px,#1c2028_1010px,#1b2028_1366px)] pb-[2px] text-[11px] text-white">
      <svg width={25} height={24} viewBox="0 0 25 24" className="mb-[3px] ml-[19px]">
        <path d="M10 0C14 6 10 13 1 11C4 16 14 16 14 8Z" fill="#f5b32f" /><path d="M0 10Q4 15 9 13L4 16Z" fill="#f08a24" />
        <path d="M5 23A5 5 0 0 1 4 14Q6 15 7 13A6 6 0 0 1 18 13A5 5 0 0 1 19 23Z" fill="#a9c8f8" /><path d="M3 22Q10 19 22 20Q21 23 19 23H5Z" fill="#7fa8ea" />
      </svg>
      <div className="ml-[6px] w-[369px] text-[11.500px] leading-[16px]"><div>25°C</div><div className="text-[#c9ccd2]">Berawan</div></div>
      <svg width={24} height={24} viewBox="0 0 24 24" className="ml-px"><path d="M0 0H11.500V11.500H0Z" fill="#7ad6fb" /><path d="M12.500 0H24V11.500H12.500Z" fill="#57cdfb" /><path d="M0 12.500H11.500V24H0Z" fill="#42c0f8" /><path d="M12.500 12.500H24V24H12.500Z" fill="#1ba8f5" /></svg>
      <div className="ml-[14px] flex h-[32px] w-[100px] items-center rounded-full bg-[#252e55] pl-[22px] text-[12px] tracking-[-0.3px]">
        <Search size={16} strokeWidth={2.400} className="mr-[4px]" />Search
      </div>
      <div className="ml-[3px] flex">
        {apps.map((a) => (
          <div key={a.k} className="flex h-[46px] w-[44px] justify-center pt-[3px]">
            <div className={"flex h-[41px] w-[40px] flex-col items-center rounded pt-[8px] " + (a.on ? "bg-white/10" : "")}>
              <svg width={24} height={24} viewBox="0 0 24 24" className="shrink-0 overflow-visible font-['Open_Sans']">{a.art}</svg>
              <span className={"mt-[4px] h-[3px] shrink-0 rounded-full " + (a.on ? "w-[16px] bg-[#4cc2ff]" : "w-[6px] bg-[#8f93a5]")} />
            </div>
          </div>
        ))}
      </div>
      <ChevronUp size={15} strokeWidth={2.500} className="ml-auto" />
      <Wifi size={17} strokeWidth={2.200} className="ml-[16px]" />
      <svg width={16} height={14} viewBox="0 0 16 14" fill="none" stroke="white" strokeWidth={1.200} className="ml-[6px]"><path d="M1 5H3.500L7 1.500V12.500L3.500 9H1ZM9 5Q10.500 7 9 9" /><path d="M11 3Q14 7 11 11M13 1.500Q17 7 13 12.500" stroke="#666c75" /></svg>
      <svg width={16} height={14} viewBox="0 0 16 14" fill="none" stroke="white" strokeWidth={1.400} className="ml-[8px]"><path d="M6 3.500H12Q13.500 3.500 13.500 5V10.500Q13.500 12 12 12H3Q1.500 12 1.500 10.500V8" /><path d="M6 5.500H11.500V10H4V8Z" fill="white" stroke="none" /><path d="M14 6.500H15.500V9H14" /><path d="M3.500 0L0 5H2.500L1.500 8.500L6 3.500H3.500Z" fill="white" stroke="none" /></svg>
      <div className="ml-[11px] w-[69px] text-right text-[11.500px] leading-[16px] tracking-[0.05px]"><div>00:27</div><div>27/09/2023</div></div>
      <div className="ml-[10px] mr-[18px] flex h-[18px] w-[18px] items-center justify-center rounded-full bg-[#4cc2ff] text-[10px] tracking-tight text-black">24</div>
    </div>
  );
}

export default function App() {
  return (
    <div className="flex h-[768px] w-[1366px] flex-col overflow-hidden bg-[#e6e6e6] font-['Open_Sans',sans-serif] text-[12px] tracking-[-0.2px] text-[#262626]">
      <div className="relative bg-[#b7472a]">
        <Pattern />
        <div className="relative"><TitleBar /><TabRow /></div>
      </div>
      <div className="flex h-[93px] border-b border-[#d0d0d0] bg-[#f3f3f3] tracking-[-0.3px]">
        <Clipboard /><Slides /><FontGroup /><Paragraph /><Drawing /><Editing />
        <svg width={11} height={6} viewBox="0 0 11 6" fill="none" stroke="#555" className="mb-[4px] ml-auto mr-[8px] self-end"><path d="M.5 5.500L5.500.5l5 5" /></svg>
      </div>
      <div className="flex h-[541px]"><NavPane /><Editor /></div>
      <StatusBar />
      <Taskbar />
    </div>
  );
}
